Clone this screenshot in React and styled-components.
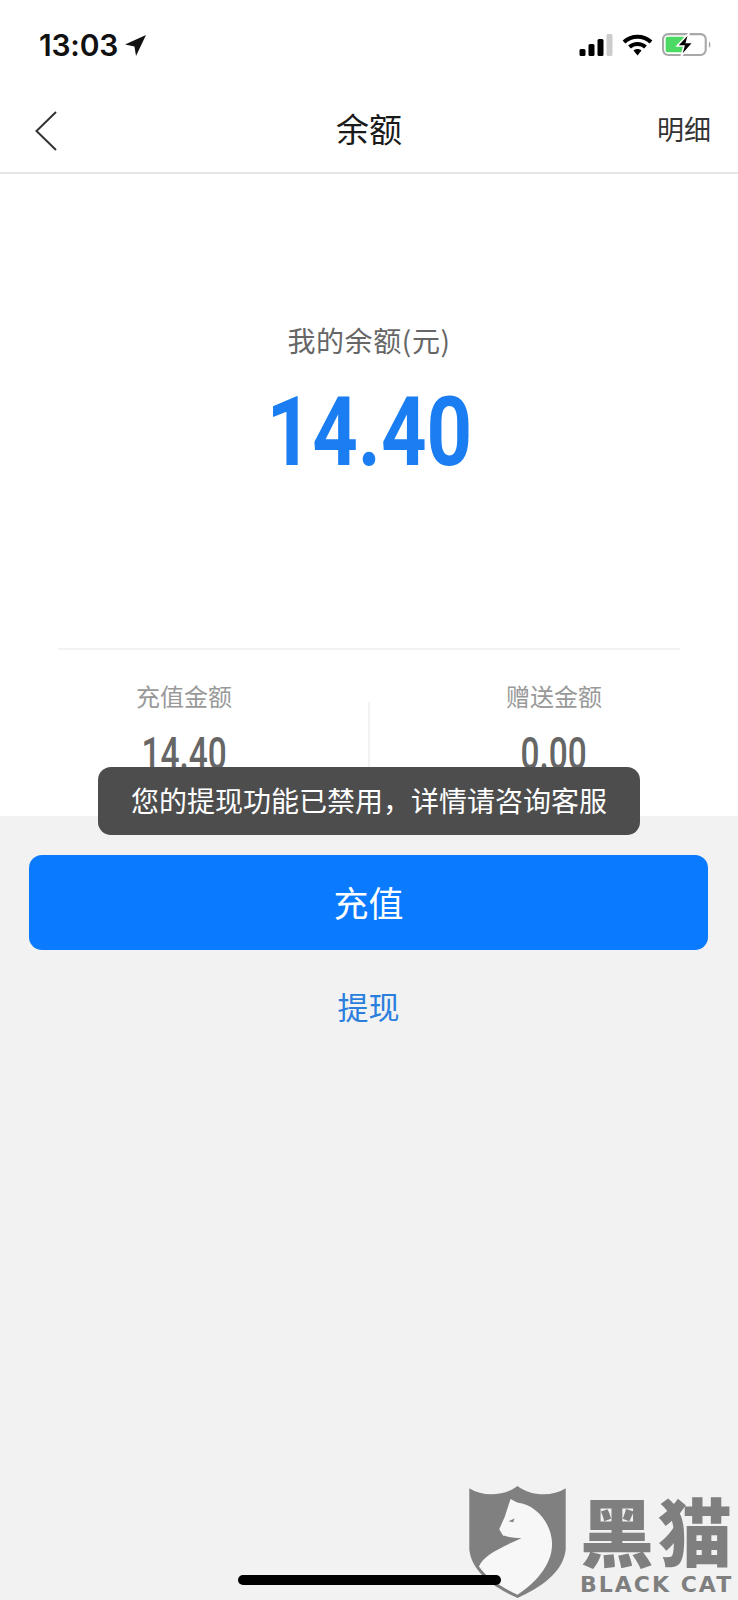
import React from 'react'
import styled, { createGlobalStyle } from 'styled-components'

const cjk = `"Noto Sans CJK SC", "Noto Sans", sans-serif`
const din = `Roboto, "Liberation Sans", sans-serif`

const GlobalStyle = createGlobalStyle`
  html, body {
    margin: 0;
    padding: 0;
    background: #f2f2f2;
  }
`

const Page = styled.div`
  position: relative;
  width: 738px;
  height: 1600px;
  overflow: hidden;
  display: flex;
  flex-direction: column;
  background: #f2f2f2;
  font-family: ${cjk};
`

const StatusBar = styled.div`
  height: 90px;
  box-sizing: border-box;
  padding: 31px 26px 0 39px;
  display: flex;
  justify-content: space-between;
  align-items: flex-start;
  background: #fff;
`

const Clock = styled.div`
  display: flex;
  align-items: center;
  gap: 7px;
  font-family: Inter, sans-serif;
  font-size: 30px;
  font-weight: 600;
  line-height: 28px;
  letter-spacing: -0.2px;
  color: #111;
`

const StatusIcons = styled.div`
  display: flex;
  align-items: center;
  gap: 9px;
  margin-top: 2px;
`

const Header = styled.header`
  height: 82px;
  display: grid;
  grid-template-columns: 1fr auto 1fr;
  align-items: center;
  padding: 0 27px;
  background: #fff;
  border-bottom: 2px solid #e6e6e6;
`

const BackButton = styled.div`
  display: flex;
  align-items: center;
  height: 40px;
  margin-left: 8px;
`

const Title = styled.h1`
  margin: 0 0 6px;
  font-size: 33px;
  font-weight: 400;
  line-height: 40px;
  color: #1a1a1a;
`

const HeaderLink = styled.div`
  justify-self: end;
  margin-bottom: 4px;
  font-size: 27px;
  line-height: 40px;
  color: #333;
`

const Panel = styled.section`
  height: 642px;
  box-sizing: border-box;
  padding-top: 148px;
  display: flex;
  flex-direction: column;
  align-items: center;
  background: #fff;
`

const BalanceLabel = styled.div`
  font-size: 28px;
  letter-spacing: 0.6px;
  line-height: 36px;
  color: #666;
`

const BalanceAmount = styled.div`
  margin-top: 24px;
  font-family: ${din};
  font-size: 97px;
  font-weight: 700;
  line-height: 100px;
  color: #1a7ef2;
  transform: scaleX(0.82);
`

const Rule = styled.div`
  align-self: stretch;
  margin: 166px 58px 0;
  height: 2px;
  background: #f2f2f2;
`

const Stats = styled.div`
  align-self: stretch;
  display: grid;
  grid-template-columns: 1fr 2px 1fr;
  padding-top: 31px;
`

const Stat = styled.div`
  display: flex;
  flex-direction: column;
  align-items: center;
`

const StatDivider = styled.div`
  margin-top: 21px;
  height: 68px;
  background: #f2f2f2;
`

const StatLabel = styled.div`
  font-size: 24px;
  line-height: 30px;
  color: #999;
`

const StatValue = styled.div`
  margin-top: 19px;
  font-family: ${din};
  font-size: 44px;
  font-weight: 500;
  line-height: 48px;
  color: #666;
  transform: scaleX(0.76);
`

const Actions = styled.div`
  display: flex;
  flex-direction: column;
  align-items: center;
  padding: 39px 30px 0 29px;
`

const PrimaryButton = styled.div`
  align-self: stretch;
  height: 95px;
  box-sizing: border-box;
  padding-bottom: 3px;
  display: flex;
  align-items: center;
  justify-content: center;
  border-radius: 13px;
  background: #0a7aff;
  font-size: 35px;
  color: #fff;
`

const TextButton = styled.div`
  margin-top: 34px;
  font-size: 31px;
  line-height: 44px;
  color: #2a7fde;
`

const Toast = styled.div`
  position: absolute;
  left: 98px;
  top: 767px;
  width: 542px;
  height: 68px;
  box-sizing: border-box;
  padding-bottom: 3px;
  display: flex;
  align-items: center;
  justify-content: center;
  border-radius: 13px;
  background: #4d4d4d;
  font-size: 28px;
  color: #fff;
  white-space: nowrap;
`

const Watermark = styled.div`
  position: absolute;
  left: 469px;
  top: 1486px;
  display: flex;
  gap: 14px;
  color: #7f7f7f;
`

const Brand = styled.div`
  display: flex;
  flex-direction: column;
  align-items: flex-start;
`

const BrandName = styled.div`
  margin-top: 6px;
  font-size: 74px;
  font-weight: 900;
  letter-spacing: 4px;
  line-height: 74px;
  white-space: nowrap;
`

const BrandLatin = styled.div`
  margin-top: 8px;
  font-family: "DejaVu Sans", sans-serif;
  font-size: 22px;
  font-weight: 700;
  letter-spacing: 2px;
  line-height: 22px;
  white-space: nowrap;
`

const HomeIndicator = styled.div`
  position: absolute;
  left: 238px;
  top: 1575px;
  width: 263px;
  height: 10px;
  border-radius: 5px;
  background: #000;
`

function LocationArrow() {
  return (
    <svg width="21" height="21" viewBox="0 0 20 20">
      <path d="M20 0 L0 9 L9 11 L10.5 20 Z" fill="#111" />
    </svg>
  )
}

function SignalIcon() {
  return (
    <svg width="34" height="22" viewBox="0 0 33 22">
      <rect x="0" y="15" width="6" height="7" rx="1.5" fill="#000" />
      <rect x="9" y="10" width="6" height="12" rx="1.5" fill="#000" />
      <rect x="18" y="5" width="6" height="17" rx="1.5" fill="#000" />
      <rect x="27" y="0" width="6" height="22" rx="1.5" fill="#ccc" />
    </svg>
  )
}

function WifiIcon() {
  return (
    <svg width="31" height="22" viewBox="0 0 31 22">
      <path d="M2 8 C9.5 1 21.5 1 29 8" fill="none" stroke="#000" strokeWidth="4" />
      <path d="M7.5 13 C12 9 19 9 23.5 13" fill="none" stroke="#000" strokeWidth="4" />
      <path d="M11.5 16.5 C13.8 14.5 17.2 14.5 19.5 16.5 L15.5 21.5 Z" fill="#000" />
    </svg>
  )
}

function BatteryIcon() {
  return (
    <svg width="50" height="23" viewBox="0 0 48 22">
      <rect x="1" y="1" width="41" height="20" rx="5" fill="none" stroke="#a8a8a8" strokeWidth="2" />
      <rect x="3.5" y="3.5" width="18" height="15" rx="2" fill="#4cd964" />
      <path d="M45 8 C47 8.5 47 13.5 45 14 Z" fill="#a8a8a8" />
      <path d="M26 0 L14.5 12.5 L21 12.5 L18.5 22 L30 9 L23.5 9 Z" fill="#000" stroke="#fff" strokeWidth="1.5" />
    </svg>
  )
}

function BackIcon() {
  return (
    <svg width="22" height="40" viewBox="0 0 22 40">
      <path d="M21 1 L1.5 20 L21 39" fill="none" stroke="#333" strokeWidth="2" />
    </svg>
  )
}

function ShieldLogo() {
  return (
    <svg width="97" height="112" viewBox="88 78 290 337">
      <path
        d="M88 85 C130 112 195 108 233 78 C271 108 336 112 378 85 L378 270 C370 340 300 385 233 415 C166 385 96 340 88 270 Z"
        fill="#808080"
      />
      <path
        d="M212 117 L232 128 C290 135 335 190 337 250 C338 320 280 375 233 405 C190 385 140 355 117 320 C130 285 190 260 245 235 C225 235 205 232 195 228 L190 228 L178 208 L195 170 Z"
        fill="#f7f7f7"
      />
      <path d="M206 184 L224 176 L220 187 Z" fill="#808080" />
    </svg>
  )
}

const toastText = '您的提现功能已禁用\uFF0C详情请咨询客服'

const stats = [
  { label: '充值金额', value: '14.40' },
  { label: '赠送金额', value: '0.00' }
]

export default function App() {
  return (
    <Page>
      <GlobalStyle />
      <StatusBar>
        <Clock>
          13:03
          <LocationArrow />
        </Clock>
        <StatusIcons>
          <SignalIcon />
          <WifiIcon />
          <BatteryIcon />
        </StatusIcons>
      </StatusBar>
      <Header>
        <BackButton>
          <BackIcon />
        </BackButton>
        <Title>余额</Title>
        <HeaderLink>明细</HeaderLink>
      </Header>
      <Panel>
        <BalanceLabel>我的余额(元)</BalanceLabel>
        <BalanceAmount>14.40</BalanceAmount>
        <Rule />
        <Stats>
          <Stat>
            <StatLabel>{stats[0].label}</StatLabel>
            <StatValue>{stats[0].value}</StatValue>
          </Stat>
          <StatDivider />
          <Stat>
            <StatLabel>{stats[1].label}</StatLabel>
            <StatValue>{stats[1].value}</StatValue>
          </Stat>
        </Stats>
      </Panel>
      <Actions>
        <PrimaryButton>充值</PrimaryButton>
        <TextButton>提现</TextButton>
      </Actions>
      <Toast>{toastText}</Toast>
      <Watermark>
        <ShieldLogo />
        <Brand>
          <BrandName>黑猫</BrandName>
          <BrandLatin>BLACK CAT</BrandLatin>
        </Brand>
      </Watermark>
      <HomeIndicator />
    </Page>
  )
}
